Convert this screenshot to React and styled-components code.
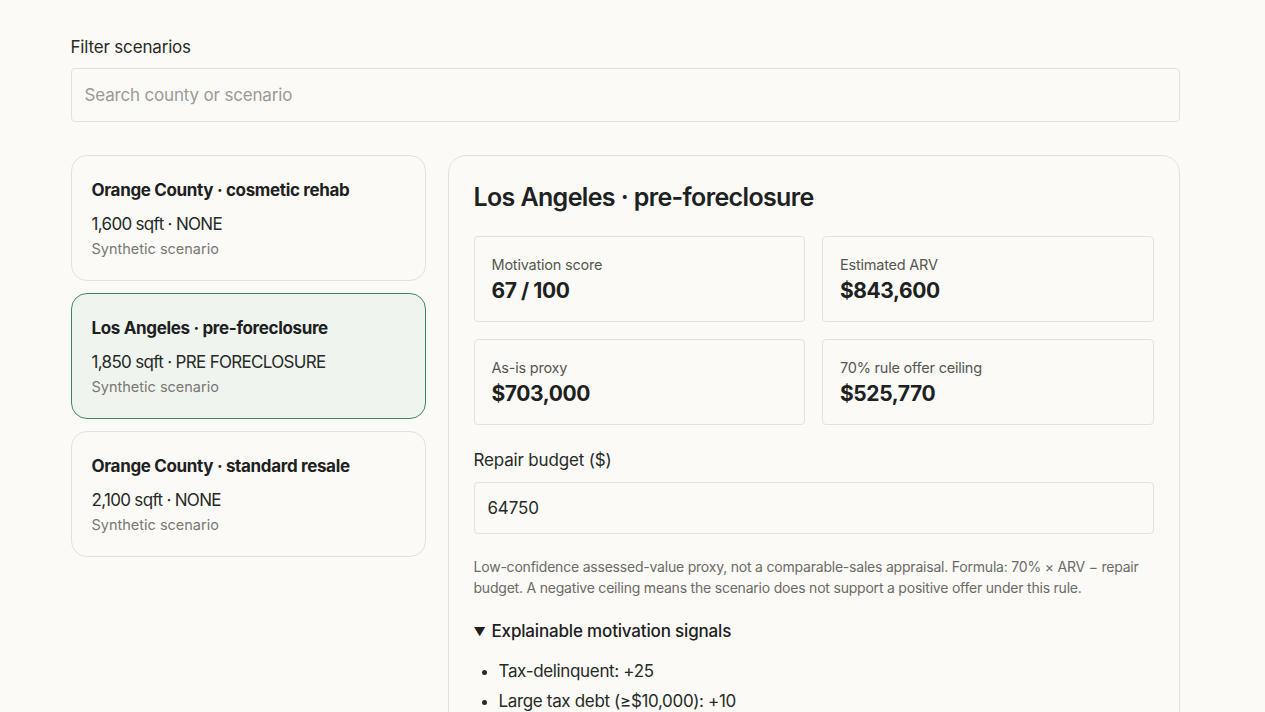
import React, { useState } from "react";
import styled, { createGlobalStyle } from "styled-components";

const Global = createGlobalStyle`
  html, body { margin: 0; padding: 0; background: #fbfaf6; }
  body { font-family: "Inter", "Noto Sans", sans-serif; color: #1d211f; padding-right: 15px; }
  * { box-sizing: border-box; }
`;

const Page = styled.main`
  max-width: 1109px;
  margin: 0 auto;
  padding: 37px 0 120px;
`;

const Field = styled.label`
  display: flex;
  flex-direction: column;
  gap: 11px;
  font-size: 17px;
  line-height: 20px;
  color: #262a28;
  letter-spacing: -0.01em;
`;

const TextInput = styled.input`
  width: 100%;
  height: ${(p) => p.$h || 54}px;
  border: 1px solid #e3e1da;
  border-radius: 4px;
  background: #fbfaf6;
  padding: 0 13px;
  font: inherit;
  font-size: 17px;
  color: #262a28;
  letter-spacing: -0.01em;
  outline: none;
  &::placeholder { color: #9a9a96; }
`;

const Layout = styled.div`
  display: grid;
  grid-template-columns: 355px 1fr;
  gap: 22px;
  margin-top: 33px;
  align-items: start;
`;

const List = styled.div`
  display: flex;
  flex-direction: column;
  gap: 12px;
`;

const Card = styled.button`
  text-align: left;
  font: inherit;
  color: inherit;
  cursor: pointer;
  height: 126px;
  padding: 22px 20px 0;
  border-radius: 16px;
  border: 1px solid ${(p) => (p.$active ? "#3b8a5e" : "#e3e1da")};
  background: ${(p) => (p.$active ? "#eff4ee" : "#fbfaf6")};
  display: flex;
  flex-direction: column;
`;

const CardTitle = styled.div`
  font-size: 17px;
  font-weight: 650;
  letter-spacing: -0.02em;
  line-height: 24px;
`;

const CardMeta = styled.div`
  margin-top: 11px;
  font-size: 17px;
  letter-spacing: -0.04em;
  line-height: 22px;
  color: #262a28;
`;

const CardSub = styled.div`
  margin-top: 4px;
  font-size: 14.5px;
  color: #787874;
  letter-spacing: 0;
  line-height: 20px;
`;

const Panel = styled.section`
  border: 1px solid #e3e1da;
  border-radius: 18px;
  padding: 24px 25px 40px;
  background: #fbfaf6;
`;

const PanelTitle = styled.h2`
  margin: 0;
  font-size: 25px;
  font-weight: 600;
  letter-spacing: -0.025em;
  line-height: 34px;
`;

const Stats = styled.div`
  display: grid;
  grid-template-columns: 1fr 1fr;
  gap: 17px;
  margin-top: 22px;
`;

const Stat = styled.div`
  border: 1px solid #e3e1da;
  border-radius: 4px;
  height: 86px;
  padding: 19px 17px 0;
`;

const StatLabel = styled.div`
  font-size: 14.5px;
  color: #555753;
  letter-spacing: -0.015em;
  line-height: 18px;
`;

const StatValue = styled.div`
  margin-top: 3px;
  font-size: 21px;
  font-weight: 700;
  letter-spacing: -0.02em;
  line-height: 28px;
`;

const BudgetField = styled(Field)`
  margin-top: 25px;
  gap: 12px;
`;

const Note = styled.p`
  margin: 22px 0 0;
  font-size: 14px;
  line-height: 21px;
  color: #6b6b67;
  letter-spacing: -0.015em;
`;

const Details = styled.details`
  margin-top: 23px;
  & > summary {
    list-style: none;
    cursor: pointer;
    font-size: 17px;
    font-weight: 500;
    letter-spacing: -0.01em;
    display: flex;
    align-items: center;
    gap: 6px;
  }
  & > summary::-webkit-details-marker { display: none; }
`;

const Caret = styled.span`
  font-size: 12px;
  width: 12px;
`;

const Signals = styled.ul`
  margin: 15px 0 0;
  padding-left: 25px;
  & li {
    font-size: 17px;
    line-height: 30px;
    letter-spacing: -0.02em;
    color: #262a28;
  }
`;

const scenarios = [
  { id: "oc-rehab", title: "Orange County · cosmetic rehab", meta: "1,600 sqft · NONE" },
  { id: "la-pre", title: "Los Angeles · pre-foreclosure", meta: "1,850 sqft · PRE FORECLOSURE" },
  { id: "oc-resale", title: "Orange County · standard resale", meta: "2,100 sqft · NONE" },
];

export default function App() {
  const [active, setActive] = useState("la-pre");
  const [budget, setBudget] = useState("64750");

  return (
    <>
      <Global />
      <Page>
        <Field>
          Filter scenarios
          <TextInput placeholder="Search county or scenario" />
        </Field>

        <Layout>
          <List>
            {scenarios.map((s) => (
              <Card key={s.id} $active={s.id === active} onClick={() => setActive(s.id)}>
                <CardTitle>{s.title}</CardTitle>
                <CardMeta>{s.meta}</CardMeta>
                <CardSub>Synthetic scenario</CardSub>
              </Card>
            ))}
          </List>

          <Panel>
            <PanelTitle>Los Angeles · pre-foreclosure</PanelTitle>
            <Stats>
              <Stat>
                <StatLabel>Motivation score</StatLabel>
                <StatValue>67 / 100</StatValue>
              </Stat>
              <Stat>
                <StatLabel>Estimated ARV</StatLabel>
                <StatValue>$843,600</StatValue>
              </Stat>
              <Stat>
                <StatLabel>As-is proxy</StatLabel>
                <StatValue>$703,000</StatValue>
              </Stat>
              <Stat>
                <StatLabel>70% rule offer ceiling</StatLabel>
                <StatValue>$525,770</StatValue>
              </Stat>
            </Stats>

            <BudgetField>
              Repair budget ($)
              <TextInput $h={52} value={budget} onChange={(e) => setBudget(e.target.value)} />
            </BudgetField>

            <Note>
              Low-confidence assessed-value proxy, not a comparable-sales appraisal. Formula: 70% × ARV − repair budget. A negative ceiling means the scenario does not support a positive offer under this rule.
            </Note>

            <Details open>
              <summary>
                <Caret>▼</Caret>
                Explainable motivation signals
              </summary>
              <Signals>
                <li>Tax-delinquent: +25</li>
                <li>Large tax debt (≥$10,000): +10</li>
                <li>Pre-foreclosure filing: +20</li>
                <li>Owner age 65+: +7</li>
                <li>Long tenure (15+ years): +5</li>
              </Signals>
            </Details>
          </Panel>
        </Layout>
      </Page>
    </>
  );
}
